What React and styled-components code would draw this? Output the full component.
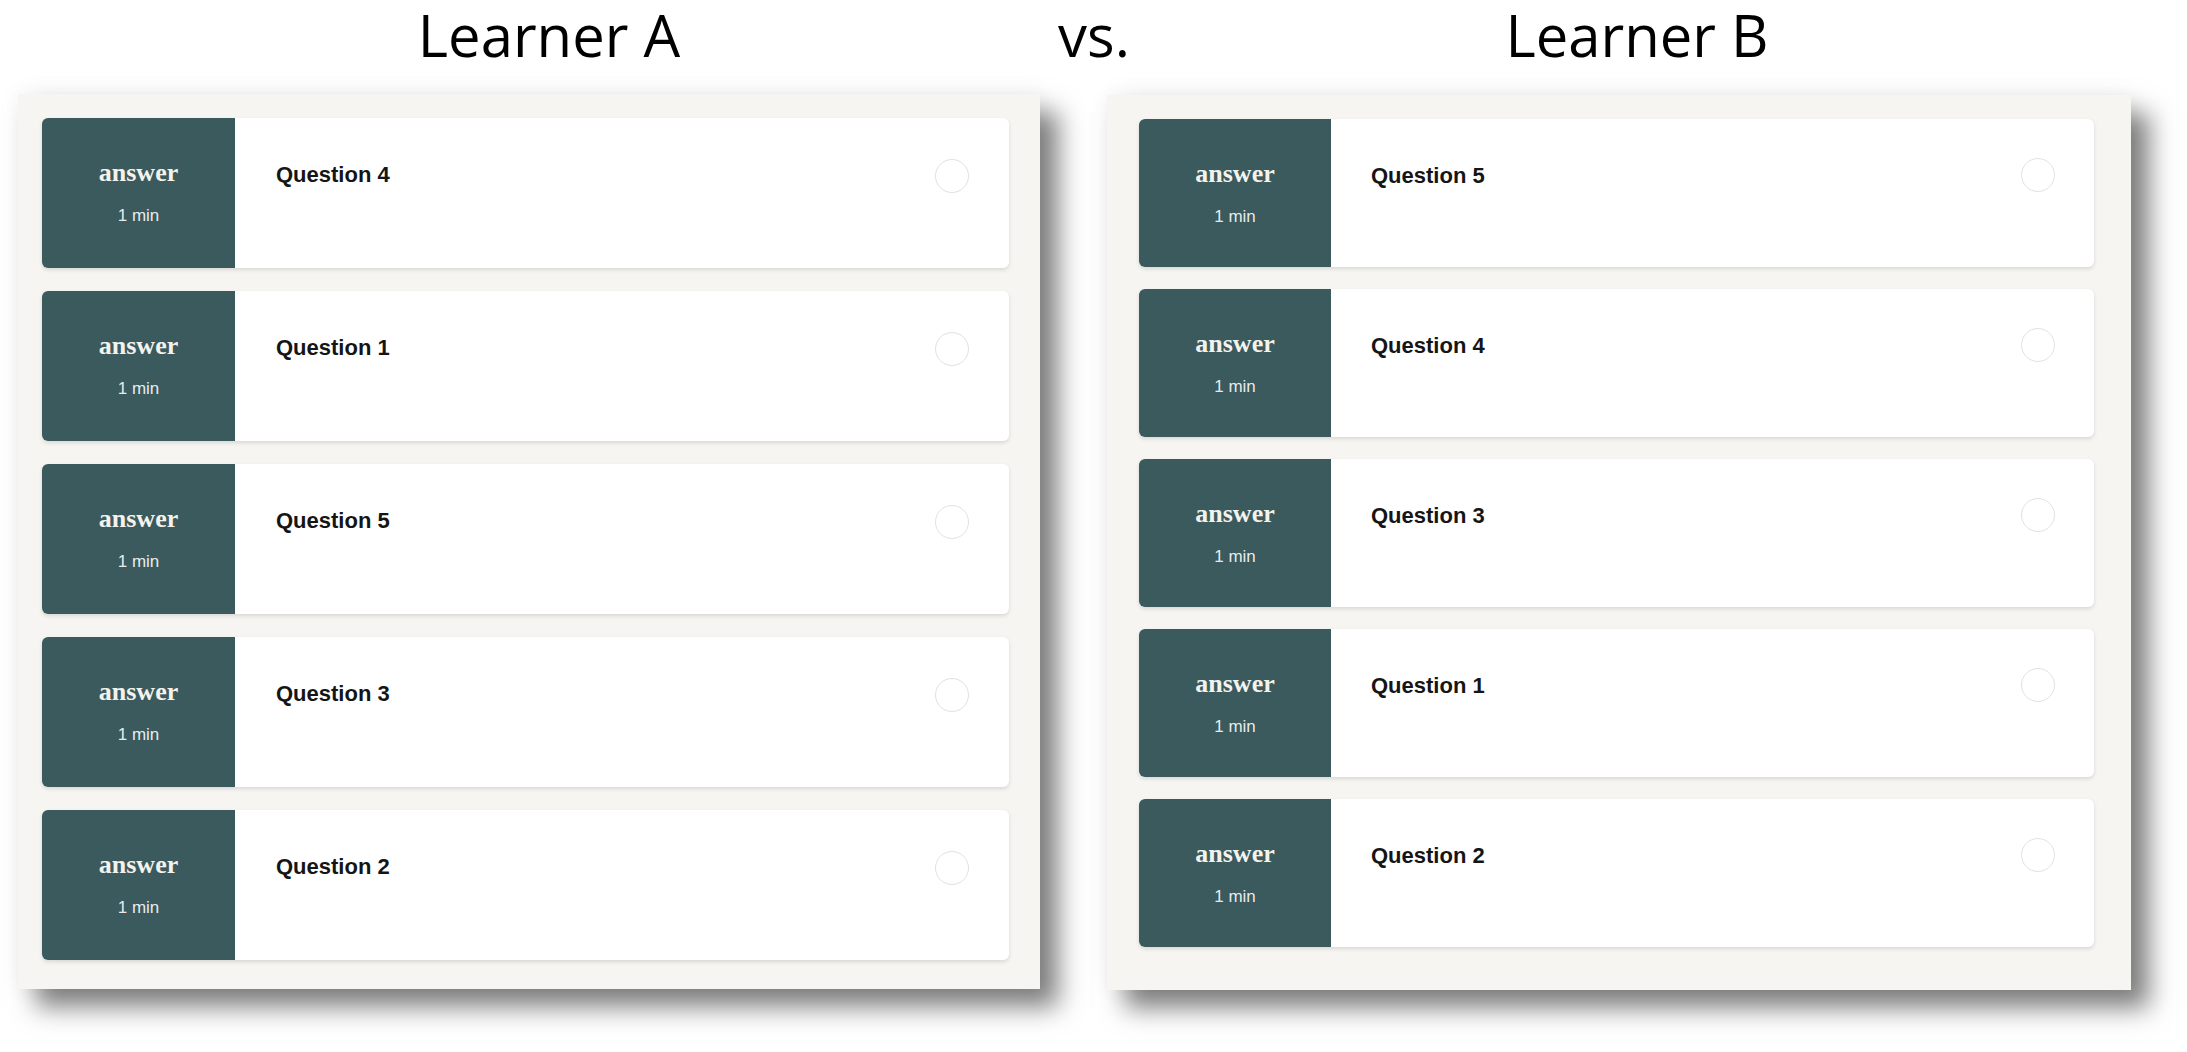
import React from 'react';
import styled, { createGlobalStyle } from 'styled-components';

const learners = [
  {
    name: 'Learner A',
    questions: [4, 1, 5, 3, 2],
    panel: { top: 24, width: 1022, height: 895, pad: '24px 31px 30px 24px' },
    card: { height: 150, gap: 23, side: 193, textLeft: 41, circleRight: 40, circleTop: 41 },
  },
  {
    name: 'Learner B',
    questions: [5, 4, 3, 1, 2],
    panel: { top: 25, width: 1024, height: 895, pad: '24px 37px 42px 32px' },
    card: { height: 148, gap: 22, side: 192, textLeft: 40, circleRight: 39, circleTop: 39 },
  },
];

const App = () => {
  return (
    <Page>
      <GlobalStyle />
      <Header>
        <Title $shift={23}>{learners[0].name}</Title>
        <Title>vs.</Title>
        <Title>{learners[1].name}</Title>
      </Header>
      <Board>
        {learners.map((learner) => (
          <Panel
            key={learner.name}
            $top={learner.panel.top}
            $width={learner.panel.width}
            $height={learner.panel.height}
            $pad={learner.panel.pad}
            $gap={learner.card.gap}
          >
            {learner.questions.map((q) => (
              <Card key={q} $height={learner.card.height}>
                <Side $width={learner.card.side}>
                  <Answer>answer</Answer>
                  <Duration>1 min</Duration>
                </Side>
                <Body $left={learner.card.textLeft}>
                  <Question>Question {q}</Question>
                  <Check $right={learner.card.circleRight} $top={learner.card.circleTop} />
                </Body>
              </Card>
            ))}
          </Panel>
        ))}
      </Board>
    </Page>
  );
};

export default App;

const GlobalStyle = createGlobalStyle`
  html, body {
    margin: 0;
    padding: 0;
    background: #ffffff;
  }
  body {
    font-family: "Liberation Sans", Arial, sans-serif;
  }
`;

const Page = styled.div`
  width: 2187px;
  height: 1052px;
  overflow: hidden;
  background: #ffffff;
`;

const Header = styled.div`
  display: grid;
  grid-template-columns: 1039px 74px 1012px;
  padding-left: 18px;
  height: 70px;
`;

const Title = styled.div`
  text-align: center;
  padding-left: ${(p) => p.$shift || 0}px;
  font-family: "Open Sans", sans-serif;
  font-size: 58px;
  line-height: 70px;
  color: #000;
  white-space: nowrap;
`;

const Board = styled.div`
  display: flex;
  align-items: flex-start;
  gap: 67px;
  padding-left: 18px;
`;

const Panel = styled.div`
  box-sizing: border-box;
  margin-top: ${(p) => p.$top}px;
  width: ${(p) => p.$width}px;
  height: ${(p) => p.$height}px;
  padding: ${(p) => p.$pad};
  background: #f6f5f1;
  display: flex;
  flex-direction: column;
  gap: ${(p) => p.$gap}px;
  box-shadow: 18px 18px 24px rgba(0, 0, 0, 0.5), 0 -2px 22px rgba(0, 0, 0, 0.05);
`;

const Card = styled.div`
  display: flex;
  height: ${(p) => p.$height}px;
  flex-shrink: 0;
  background: #ffffff;
  border-radius: 6px;
  overflow: hidden;
  box-shadow: 0 2px 4px rgba(0, 0, 0, 0.12);
`;

const Side = styled.div`
  width: ${(p) => p.$width}px;
  flex-shrink: 0;
  background: #3a5a5e;
  display: flex;
  flex-direction: column;
  align-items: center;
  padding-top: 40px;
  box-sizing: border-box;
`;

const Answer = styled.div`
  font-family: "Liberation Serif", "Times New Roman", serif;
  font-weight: 700;
  font-size: 26px;
  line-height: 30px;
  color: #f4f2ec;
`;

const Duration = styled.div`
  margin-top: 18px;
  font-size: 17px;
  line-height: 20px;
  color: rgba(255, 255, 255, 0.9);
`;

const Body = styled.div`
  flex: 1;
  display: flex;
  justify-content: space-between;
  align-items: flex-start;
  padding: 44px 0 0 ${(p) => p.$left}px;
`;

const Question = styled.div`
  font-weight: 700;
  font-size: 22px;
  line-height: 26px;
  color: #151515;
`;

const Check = styled.div`
  width: 32px;
  height: 32px;
  margin: ${(p) => p.$top - 44}px ${(p) => p.$right}px 0 0;
  border: 1.5px solid #e1e1e1;
  border-radius: 50%;
`;
